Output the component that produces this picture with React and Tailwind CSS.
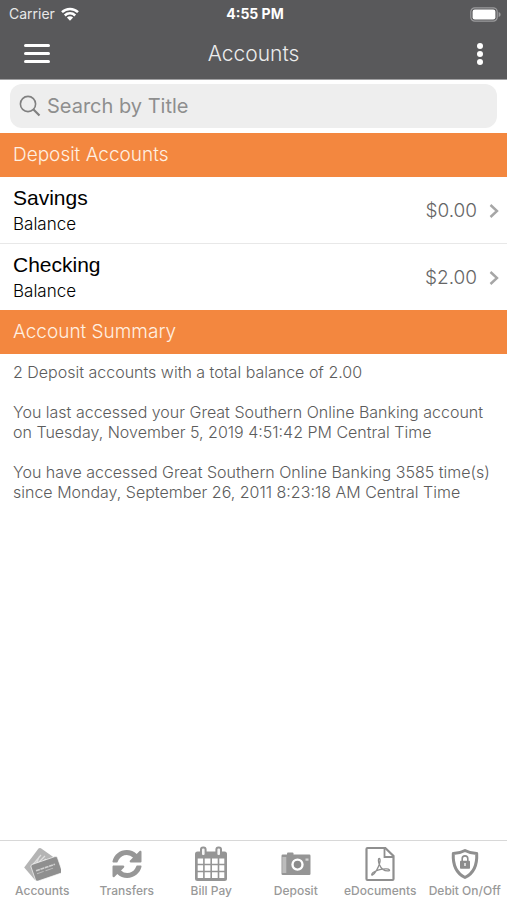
const accounts = [
  { name: "Savings", balance: "$0.00" },
  { name: "Checking", balance: "$2.00" },
];

const summary = [
  "2 Deposit accounts with a total balance of 2.00",
  "You last accessed your Great Southern Online Banking account on Tuesday, November 5, 2019 4:51:42 PM Central Time",
  "You have accessed Great Southern Online Banking 3585 time(s) since Monday, September 26, 2011 8:23:18 AM Central Time",
];

const tabs = [
  { label: "Accounts", Icon: CardsIcon },
  { label: "Transfers", Icon: TransferIcon },
  { label: "Bill Pay", Icon: CalendarIcon },
  { label: "Deposit", Icon: CameraIcon },
  { label: "eDocuments", Icon: PdfIcon },
  { label: "Debit On/Off", Icon: ShieldIcon },
];

/* ─── Status bar icons ──────────────────────────────── */
function WifiIcon() {
  return (
    <svg viewBox="0 0 18 14" className="w-[18px] h-[14px]" aria-hidden="true">
      <g fill="none" stroke="white" strokeWidth="2.5">
        <path d="M1 5.200a11.400 11.400 0 0 1 16 0" />
        <path d="M3.800 8.500a7.400 7.400 0 0 1 10.400 0" />
      </g>
      <path d="M9 13.800 5.900 10.600a4.400 4.400 0 0 1 6.200 0z" fill="white" />
    </svg>
  );
}

function BatteryIcon() {
  return (
    <svg viewBox="0 0 31 15" className="w-[31px] h-[15px]" aria-hidden="true">
      <rect x="0.8" y="0.8" width="26.4" height="13.4" rx="4" fill="none" stroke="#9b9b9d" strokeWidth="1.2" />
      <rect x="2.600" y="2.600" width="22.800" height="9.800" rx="2.200" fill="white" />
      <path d="M28.600 5c1.400.4 2 1.400 2 2.500s-.6 2.100-2 2.500z" fill="#9b9b9d" />
    </svg>
  );
}

function SearchIcon() {
  return (
    <svg viewBox="0 0 22 22" className="w-[22px] h-[22px] flex-shrink-0" fill="none" stroke="#808080" aria-hidden="true">
      <circle cx="9" cy="9" r="7.600" strokeWidth="1.600" />
      <path d="m14.500 14.500 6 6" strokeWidth="2.200" />
    </svg>
  );
}

/* ─── Tab bar icons ─────────────────────────────────── */
function CardsIcon() {
  return (
    <svg viewBox="0 0 38 34" className="w-[38px] h-[34px]" aria-hidden="true">
      <path d="M1.200 20.500 15.500 1.600q1-1.200 2.400-.3L31 10.500 12 33z" fill="#b4b4b4" />
      <path d="m8 20 10-12m-6 11L22 9m-9 9 3-8m1 7 6-5" stroke="#dedede" strokeWidth="1.200" fill="none" />
      <g transform="rotate(-19 23 22)">
        <rect x="9.500" y="13.200" width="28" height="17.600" rx="2" fill="#8f8f8f" stroke="white" strokeWidth="0.600" />
        <path d="M13 20.500h20" stroke="#d2d2d2" strokeWidth="1.600" strokeDasharray="4 .6" />
        <path d="M13 23.500h7m2 0h8" stroke="#bdbdbd" strokeWidth="1" />
      </g>
    </svg>
  );
}

function TransferIcon() {
  return (
    <svg viewBox="0 0 32 32" className="w-8 h-8" fill="#979797" aria-hidden="true">
      <path id="sync-half" d="M1.500 13.200C3 6.800 8.800 2 15.800 2c3.800 0 7.300 1.500 9.900 4l2.900-2.900c.8-.8 1.900-.2 1.900.8v9.500c0 .6-.5 1.100-1.100 1.100h-9.600c-1 0-1.500-1.200-.8-1.900l3-3A9 9 0 0 0 15.800 7c-3.400 0-6.400 1.800-8 4.600-.5.900-.8 1.500-1.100 2.200-.1.400-.3.600-.7.600H2.200c-.5 0-.8-.6-.7-1.200z" />
      <use href="#sync-half" transform="rotate(180 16 16)" />
    </svg>
  );
}

function CalendarIcon() {
  return (
    <svg viewBox="0 0 34 36" className="w-[34px] h-9" aria-hidden="true">
      <rect x="1" y="5.500" width="32" height="29.500" rx="2.500" fill="#959595" />
      <g fill="white">
        <path d="M3.700 12.500h5.400v5.300H3.700zM10.700 12.500h5.700v5.300h-5.700zM18 12.500h5.700v5.300H18zM25.300 12.500h5v5.300h-5z" />
        <path d="M3.700 19.300h5.400v5.500H3.700zM10.700 19.300h5.700v5.500h-5.700zM18 19.300h5.700v5.500H18zM25.300 19.300h5v5.500h-5z" />
        <path d="M3.700 26.300h5.400v5.700H3.700zM10.700 26.300h5.700v5.700h-5.700zM18 26.300h5.700v5.700H18zM25.300 26.300h5v5.700h-5z" />
      </g>
      <g fill="#f5f5f5" stroke="#959595" strokeWidth="2">
        <rect x="7" y="1.500" width="4.600" height="8.600" rx="2" />
        <rect x="22.400" y="1.500" width="4.600" height="8.600" rx="2" />
      </g>
    </svg>
  );
}

function CameraIcon() {
  return (
    <svg viewBox="0 0 30 24" className="w-[30px] h-6" aria-hidden="true">
      <path d="M6 1.600Q6 .6 7 .6h4.500q1 0 1 1V4H6z" fill="#959595" />
      <rect x="0.500" y="2.500" width="29" height="20.500" rx="1.200" fill="#959595" />
      <path d="M1.300 5h4v16h-4z" fill="#bcbcbc" />
      <circle cx="16.500" cy="12.600" r="5" fill="#8c8c8c" stroke="white" strokeWidth="2.400" />
      <path d="M24.500 6.500h3v2.200h-3z" fill="#d5d5d5" />
    </svg>
  );
}

function PdfIcon() {
  return (
    <svg viewBox="0 0 30 36" className="w-[30px] h-9" fill="none" stroke="#8f8f8f" aria-hidden="true">
      <path d="M2.500 2h17.800l8.200 8v23q0 1-1 1H2.500q-1 0-1-1V3q0-1 1-1z" strokeWidth="2.200" />
      <path d="M19.500 2v9h9" strokeWidth="1.800" />
      <path d="M14.200 12.500c-1.300.2-.9 3.300.3 6.300 1.900 4.500 5.500 6.500 9.300 6.100 1.500-.2.900-2-2.300-2.100-5.300-.1-10.500 1.600-13.400 3.800-1.800 1.500-1.700 3-.5 2.300 2.200-1.200 5.900-6.900 7.200-12.200.5-2.300.4-4.300-.6-4.200z" strokeWidth="1.300" />
    </svg>
  );
}

function ShieldIcon() {
  return (
    <svg viewBox="0 0 30 32" className="w-[30px] h-8" aria-hidden="true">
      <path
        d="M15 2.500c3.600 2 7.600 2.900 11.700 3 .6 11.500-2.400 19.500-11.700 24C5.700 25 2.700 17 3.300 5.500c4.100-.1 8.100-1 11.700-3z"
        fill="none"
        stroke="#8f8f8f"
        strokeWidth="3"
        strokeLinejoin="round"
      />
      <rect x="10" y="12.700" width="10" height="8" rx="0.800" fill="#8c8c8c" />
      <path d="M12.200 13v-2.300a2.800 2.800 0 0 1 5.600 0V13" fill="none" stroke="#8c8c8c" strokeWidth="1.600" />
      <path d="M15 15v3" stroke="white" strokeWidth="1.300" />
    </svg>
  );
}

function SectionHeader({ children }) {
  return (
    <h2 className="bg-[#f3873f] px-[13px] py-2 font-['Inter',sans-serif] text-[19px] leading-7 font-light text-[#fff0e2]">
      {children}
    </h2>
  );
}

function AccountRow({ name, balance }) {
  return (
    <li className="border-b border-[#e8e8e8] last:border-b-0">
      <a href="#" className="flex items-center justify-between pl-[13px] pr-2 pt-2 pb-1.5">
        <div>
          <p className="text-[21px] leading-[26px] text-black">{name}</p>
          <p className="font-['Inter',sans-serif] text-[17px] leading-[26px] font-light text-black">Balance</p>
        </div>
        <div className="flex items-center gap-3">
          <span className="font-['Inter',sans-serif] text-[19px] leading-6 font-light text-[#666666]">{balance}</span>
          <svg viewBox="0 0 10 16" className="w-2.5 h-4" aria-hidden="true">
            <path d="m1.500 2 6.500 6-6.500 6" fill="none" stroke="#a6a6a6" strokeWidth="2.400" />
          </svg>
        </div>
      </a>
    </li>
  );
}

function App() {
  return (
    <div className="min-h-screen flex flex-col bg-white font-['Liberation_Sans',Arial,sans-serif]">
      {/* ─── Header ────────────────────────────────────────── */}
      <header className="bg-[#59595b] border-b border-[#a0a0a2] text-white">
        <div className="grid grid-cols-3 items-center h-7 pl-[9px] pr-1.5 font-['Inter',sans-serif] text-sm">
          <div className="flex items-center gap-1.5 text-[#e8e8e8]">
            Carrier
            <WifiIcon />
          </div>
          <span className="text-center font-bold">4:55 PM</span>
          <div className="flex justify-end">
            <BatteryIcon />
          </div>
        </div>
        <div className="grid grid-cols-3 items-center h-[51px] px-6">
          <button type="button" aria-label="Menu" className="justify-self-start flex flex-col gap-[5px]">
            <span className="block w-[26px] h-[3px] rounded-sm bg-white" />
            <span className="block w-[26px] h-[3px] rounded-sm bg-white" />
            <span className="block w-[26px] h-[3px] rounded-sm bg-white" />
          </button>
          <h1 className="text-center font-['Inter',sans-serif] text-[21px] leading-7 font-light text-[#ececec]">
            Accounts
          </h1>
          <button type="button" aria-label="More options" className="justify-self-end flex flex-col gap-0.5">
            <span className="block w-1.5 h-1.5 rounded-full bg-white" />
            <span className="block w-1.5 h-1.5 rounded-full bg-white" />
            <span className="block w-1.5 h-1.5 rounded-full bg-white" />
          </button>
        </div>
      </header>

      {/* ─── Search ────────────────────────────────────────── */}
      <label className="flex items-center gap-1.5 mx-2.5 mt-1 mb-[5px] h-11 px-[9px] rounded-xl bg-[#eeeeee]">
        <SearchIcon />
        <input
          type="search"
          placeholder="Search by Title"
          aria-label="Search by Title"
          className="flex-1 min-w-0 bg-transparent outline-none font-['Inter',sans-serif] text-xl text-[#808080] placeholder:text-[#8e8e8e]"
        />
      </label>

      <main className="flex-1">
        <SectionHeader>Deposit Accounts</SectionHeader>
        <ul>
          {accounts.map((account) => (
            <AccountRow key={account.name} {...account} />
          ))}
        </ul>

        <SectionHeader>Account Summary</SectionHeader>
        <div className="flex flex-col gap-5 px-[13px] py-2 font-['Inter',sans-serif] text-base leading-5 font-light text-[#5c5c5c]">
          {summary.map((line) => (
            <p key={line}>{line}</p>
          ))}
        </div>
      </main>

      {/* ─── Tab bar ───────────────────────────────────────── */}
      <nav className="grid grid-cols-6 border-t border-[#d8d8d8] bg-white pt-1 pb-px">
        {tabs.map(({ label, Icon }) => (
          <a key={label} href="#" className="flex flex-col items-center">
            <span className="flex items-center justify-center h-[38px]">
              <Icon />
            </span>
            <span className="font-['Inter',sans-serif] text-xs leading-4 font-medium whitespace-nowrap text-[#999999]">
              {label}
            </span>
          </a>
        ))}
      </nav>
    </div>
  );
}

export default App;
